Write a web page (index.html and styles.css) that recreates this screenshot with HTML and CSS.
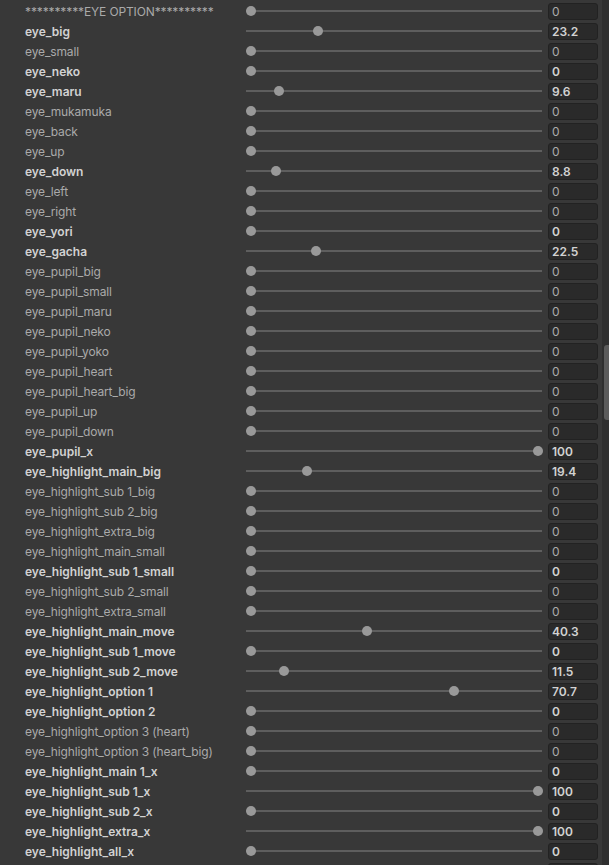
FILE: index.html
```html
<!doctype html>
<html lang="en">
<head>
    <meta http-equiv="Content-Type" content="text/html;charset=utf-8"/>
    <title>Eye Option</title>
    <link rel="stylesheet" href="styles.css">
    <script>
        window.onload = function () {
            //每一行：[名字, 数值, 是否加粗]
            var rows = [
                ["**********EYE OPTION**********", 0, false],
                ["eye_big", 23.2, true],
                ["eye_small", 0, false],
                ["eye_neko", 0, true],
                ["eye_maru", 9.6, true],
                ["eye_mukamuka", 0, false],
                ["eye_back", 0, false],
                ["eye_up", 0, false],
                ["eye_down", 8.8, true],
                ["eye_left", 0, false],
                ["eye_right", 0, false],
                ["eye_yori", 0, true],
                ["eye_gacha", 22.5, true],
                ["eye_pupil_big", 0, false],
                ["eye_pupil_small", 0, false],
                ["eye_pupil_maru", 0, false],
                ["eye_pupil_neko", 0, false],
                ["eye_pupil_yoko", 0, false],
                ["eye_pupil_heart", 0, false],
                ["eye_pupil_heart_big", 0, false],
                ["eye_pupil_up", 0, false],
                ["eye_pupil_down", 0, false],
                ["eye_pupil_x", 100, true],
                ["eye_highlight_main_big", 19.4, true],
                ["eye_highlight_sub 1_big", 0, false],
                ["eye_highlight_sub 2_big", 0, false],
                ["eye_highlight_extra_big", 0, false],
                ["eye_highlight_main_small", 0, false],
                ["eye_highlight_sub 1_small", 0, true],
                ["eye_highlight_sub 2_small", 0, false],
                ["eye_highlight_extra_small", 0, false],
                ["eye_highlight_main_move", 40.3, true],
                ["eye_highlight_sub 1_move", 0, true],
                ["eye_highlight_sub 2_move", 11.5, true],
                ["eye_highlight_option 1", 70.7, true],
                ["eye_highlight_option 2", 0, true],
                ["eye_highlight_option 3 (heart)", 0, false],
                ["eye_highlight_option 3 (heart_big)", 0, false],
                ["eye_highlight_main 1_x", 0, true],
                ["eye_highlight_sub 1_x", 100, true],
                ["eye_highlight_sub 2_x", 0, true],
                ["eye_highlight_extra_x", 100, true],
                ["eye_highlight_all_x", 0, true]
            ];

            var list = document.getElementById("list");
            var html = "";
            for (var i = 0; i < rows.length; i++) {
                var r = rows[i];
                html += '<div class="row' + (r[2] ? ' bold' : '') + '">' +
                    '<span class="name">' + r[0] + '</span>' +
                    '<div class="slider"><div class="track"></div>' +
                    '<div class="knob" style="--v:' + (r[1] / 100) + '"></div></div>' +
                    '<div class="field">' + r[1] + '</div>' +
                    '</div>';
            }
            //下一行只露出输入框的上沿
            html += '<div class="row"><span class="name"></span>' +
                '<div class="slider"></div><div class="field"></div></div>';
            list.innerHTML = html;
        }
    </script>
</head>
<body>

    <div class="panel">
        <div id="list" class="list"></div>
        <div class="scroll">
            <div class="thumb"></div>
        </div>
    </div>

</body>
</html>
```

FILE: styles.css
```css
body {
    margin: 0;
    padding: 0;
    background: #383838;
}

.panel {
    display: flex;
    height: 865px;
    overflow: hidden;
    font-family: Inter, "Noto Sans", sans-serif;
    font-size: 12px;
}

.list {
    flex: 1;
    padding-top: 1px;
}

.row {
    display: flex;
    align-items: center;
    height: 20px;
    padding-left: 25px;
    color: #aaaaaa;
    letter-spacing: -0.12px;
}

.row.bold {
    color: #d2d2d2;
    font-weight: 600;
    letter-spacing: 0;
}

.name {
    width: 221px;
    white-space: nowrap;
}

.slider {
    position: relative;
    width: 296px;
    height: 20px;
}

.track {
    position: absolute;
    left: 0;
    right: 0;
    top: 9px;
    height: 2px;
    background: #5e5e5e;
}

/* 滑块圆点，位置由数值算出 */
.knob {
    position: absolute;
    top: 5px;
    left: calc((100% - 9px) * var(--v));
    width: 10px;
    height: 10px;
    border-radius: 50%;
    background: #999;
}

.field {
    box-sizing: border-box;
    width: 50px;
    height: 17px;
    margin-left: 6px;
    padding-left: 3px;
    line-height: 15px;
    background: #2a2a2a;
    border: 1px solid #222;
    border-radius: 3px;
}

.scroll {
    width: 7px;
    margin-left: 4px;
    background: #2f2f2f;
}

.thumb {
    width: 5px;
    height: 75px;
    margin: 345px 0 0 2px;
    background: #5b5b5b;
    border-radius: 3px 0 0 3px;
}
```
